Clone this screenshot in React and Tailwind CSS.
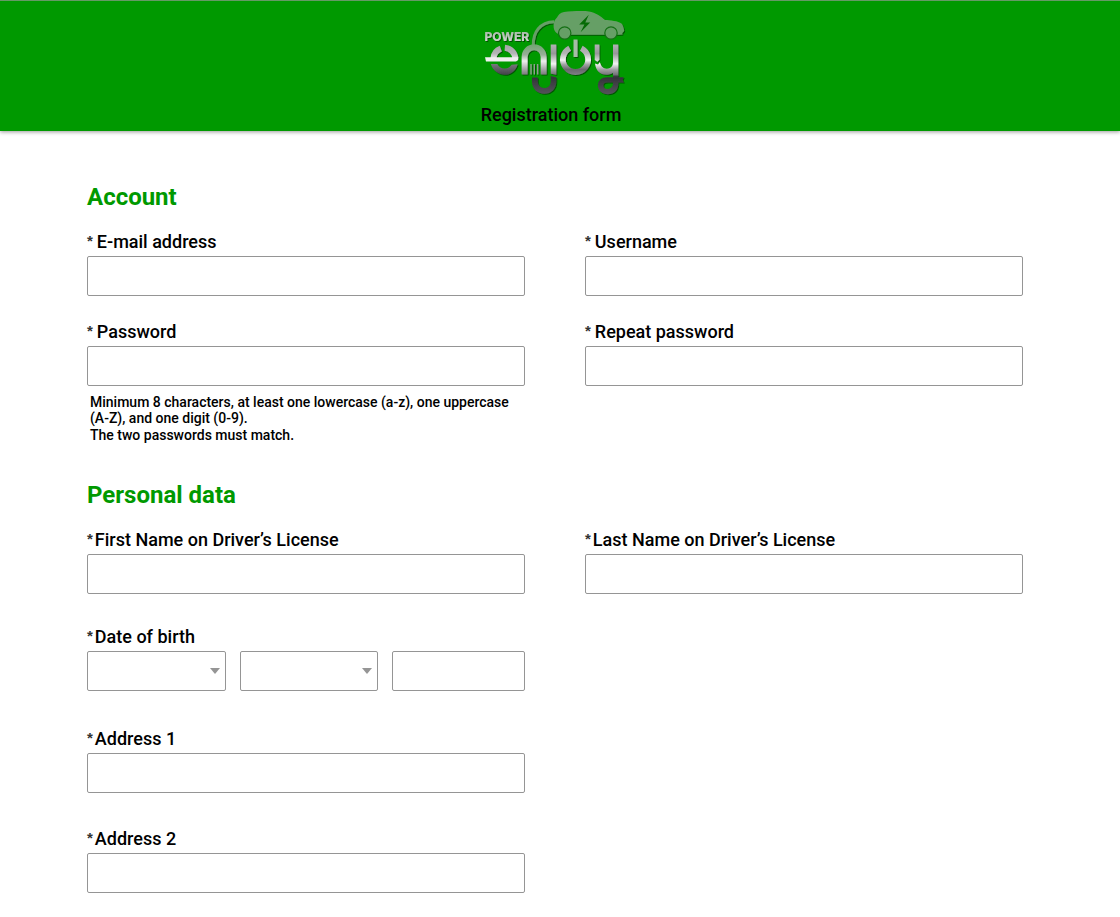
import React from "react";

function Logo() {
  return (
    <svg
      viewBox="480 8 150 90"
      role="img"
      aria-label="Power Enjoy"
      className="block h-[90px] w-[150px]"
      fill="none"
    >
      <defs>
        <linearGradient id="chrome" gradientUnits="userSpaceOnUse" x1="0" y1="44" x2="0" y2="75">
          <stop offset="0" stopColor="#a3a3a5" />
          <stop offset="0.3" stopColor="#b4b4b6" />
          <stop offset="0.52" stopColor="#f2f2f2" />
          <stop offset="0.66" stopColor="#a2a2a4" />
          <stop offset="0.82" stopColor="#68686c" />
          <stop offset="1" stopColor="#808085" />
        </linearGradient>
        <linearGradient id="stem" gradientUnits="userSpaceOnUse" x1="0" y1="44" x2="0" y2="76">
          <stop offset="0" stopColor="#b3b3b5" />
          <stop offset="0.3" stopColor="#979799" />
          <stop offset="0.62" stopColor="#f4f4f4" />
          <stop offset="0.8" stopColor="#a0a0a3" />
          <stop offset="1" stopColor="#68686c" />
        </linearGradient>
        <linearGradient id="arch" gradientUnits="userSpaceOnUse" x1="0" y1="44" x2="0" y2="75">
          <stop offset="0" stopColor="#6ea46e" />
          <stop offset="0.35" stopColor="#98af98" />
          <stop offset="0.55" stopColor="#efefef" />
          <stop offset="0.8" stopColor="#a9a9aa" />
          <stop offset="1" stopColor="#77777a" />
        </linearGradient>
        <linearGradient id="dark" gradientUnits="userSpaceOnUse" x1="0" y1="64" x2="0" y2="95">
          <stop offset="0" stopColor="#77777c" />
          <stop offset="0.45" stopColor="#34343a" />
          <stop offset="1" stopColor="#56565c" />
        </linearGradient>
        <linearGradient id="word" gradientUnits="userSpaceOnUse" x1="0" y1="32" x2="0" y2="41">
          <stop offset="0" stopColor="#a9bda9" />
          <stop offset="1" stopColor="#d2d2d2" />
        </linearGradient>
        <filter id="drop" x="-10%" y="-10%" width="120%" height="120%">
          <feDropShadow dx="1" dy="1" stdDeviation="0.5" floodColor="#003800" floodOpacity="0.7" />
        </filter>
      </defs>

      <g filter="url(#drop)">
        {/* charging cable and car */}
        <path d="M533.300 45c-.2-13 6.500-22.800 21-23.300" stroke="#669f66" strokeWidth="3" />
        <path
          d="M553.600 26c0-3.300 1-6.300 3.400-8.500 1.200-2.300 3.200-5 7-5.500 8-1 20-1.400 25-.5 6.500 1 12 5 16 8.500 5 .2 13.500 1 16.500 3.500 1.200 1.200 2.500 5 2.700 7.500l-2 2.200.3 1.300-3 .3h-56.500c-6 0-9.400-3-9.400-8.800z"
          fill="#669f66"
        />
      </g>
      <g stroke="#146f14" strokeWidth="1.200" fill="#669f66">
        <circle cx="564.700" cy="33" r="6.200" />
        <circle cx="611" cy="33" r="6.200" />
      </g>
      <path d="M588.800 14.800l-9.600 9.700h5.200l-3.800 7.800 9.600-9.800h-4.900z" fill="#066b06" />

      <g filter="url(#drop)">
        <text
          x="484.500"
          y="40.500"
          fontFamily="Inter, sans-serif"
          fontSize="12"
          fontWeight="800"
          fill="url(#word)"
        >
          POWER
        </text>

        {/* e */}
        <path
          d="M493.400 58.500A11.400 11.400 0 0 1 500.800 48.600M504.800 47.800A11.400 11.400 0 0 1 515.300 58.500"
          stroke="url(#chrome)"
          strokeWidth="6"
        />
        <path
          d="M490.800 64h6.600c1.300 2.900 3.900 4.500 7.300 4.500 3.200 0 5.400-1.400 6.900-3.800l6-.5c-1.500 6.300-6.300 10.500-12.700 10.500s-12.200-4.200-14.100-10.700z"
          fill="url(#dark)"
        />
      </g>
      <path d="M485 57.300h33.200v2.700l-2.200 1.600H486z" fill="#f0f0f0" />

      <g filter="url(#drop)">
        {/* n shaped as a plug */}
        <path d="M524.600 74.500V57a9.500 9.700 0 0 1 19 0v17.500" stroke="url(#arch)" strokeWidth="6" />
        <path d="M531 64v10.500M534.300 64v10.500M537.600 64v10.500" stroke="#8fa08f" strokeWidth="1.400" />

        {/* j */}
        <path d="M550.700 44.500h5.600v30.300l-5.600-1z" fill="url(#stem)" />
        <path
          d="M550.700 76l5.600 1.300v4.200c0 7.300-5 12.300-12 12.300s-12.300-5-12.300-12V77.500h5.800v4c0 4 2.800 6.400 6.500 6.400s6.400-2.700 6.400-6.500z"
          fill="url(#dark)"
        />

        {/* o shaped as a power button */}
        <path d="M569.700 48.200a12.600 12.600 0 1 0 11.600 0" stroke="url(#chrome)" strokeWidth="5.800" />
        <path d="M573.500 39.500h4V57h-4z" fill="#a6bda6" />

        {/* y */}
        <path d="M594.700 44.500h4.700v15.300l-2 2-2.700-1.800z" fill="url(#stem)" />
        <path
          d="M595 63.500l3 1 1.800-2.500c1.200 4.600 3.500 6.700 7 6.700 3.600 0 6-2.200 6.200-6.200v-18h5.300V76h-5.300v-3.200c-2 1.500-4.300 2-6.700 2-6.300 0-10.500-4.300-11.300-11.300z"
          fill="url(#stem)"
        />
        <path
          d="M613 75.500h5.300v1.800h5.500l-1.300 2.500 1.300 2.700h-5.500v1.500c0 6.200-4.500 10.300-10.400 10.300-5.800 0-10-4-10-8.800 0-5 4-8.200 9-8.200h6.100z M607.300 82.500c-2.500 0-4 1.200-4 3.100 0 2 1.700 3.400 4.300 3.400 3.200 0 5.400-2.400 5.400-5.700v-.8z"
          fillRule="evenodd"
          fill="url(#dark)"
        />
      </g>
    </svg>
  );
}

const boxClass =
  "block h-10 w-full rounded-xs border border-[#959595] bg-white px-3 text-base text-black outline-none focus:border-[#009900]";

function LabelText({ spaced, children }) {
  return (
    <span className={`flex items-start ${spaced ? "gap-1" : "gap-0.5"}`}>
      <span
        aria-hidden="true"
        className="font-['Liberation_Sans',sans-serif] text-[15px] leading-[22px] font-bold text-[#333333]"
      >
        *
      </span>
      <span>{children}</span>
    </span>
  );
}

function Field({ id, label, type = "text", spaced = false }) {
  return (
    <div>
      <label htmlFor={id} className="mb-0.5 block text-lg leading-6 font-medium">
        <LabelText spaced={spaced}>{label}</LabelText>
      </label>
      <input id={id} name={id} type={type} required className={boxClass} />
    </div>
  );
}

function DateSelect({ label, options }) {
  return (
    <div className="relative">
      <select aria-label={label} defaultValue="" className={`${boxClass} appearance-none`}>
        <option value=""></option>
        {options.map((option) => (
          <option key={option} value={option}>
            {option}
          </option>
        ))}
      </select>
      <svg
        viewBox="0 0 10 6"
        aria-hidden="true"
        className="pointer-events-none absolute top-[17px] right-[6px] h-1.5 w-2.5"
      >
        <path d="M0 0h10L5 6z" fill="#959595" />
      </svg>
    </div>
  );
}

function SectionTitle({ children }) {
  return <h2 className="text-2xl leading-8 font-bold text-[#009900]">{children}</h2>;
}

const days = Array.from({ length: 31 }, (_, i) => i + 1);
const months = Array.from({ length: 12 }, (_, i) => i + 1);

export default function App() {
  return (
    <div className="min-h-screen bg-white font-[Roboto,sans-serif] text-black">
      <header className="flex flex-col items-center border-t border-[#669966] bg-[#009900] pt-[7px] pb-1 shadow-[0_1px_4px_rgba(0,0,0,0.4)]">
        <div className="pr-2.5">
          <Logo />
        </div>
        <h1 className="pt-[5px] pr-[18px] text-lg leading-6 font-medium">Registration form</h1>
      </header>

      <form className="pt-[50px] pr-[97px] pb-6 pl-[87px]">
        <section>
          <SectionTitle>Account</SectionTitle>
          <div className="mt-[17px] grid grid-cols-2 gap-x-[60px] gap-y-6">
            <Field id="email" label="E-mail address" type="email" spaced />
            <Field id="username" label="Username" spaced />
            <Field id="password" label="Password" type="password" spaced />
            <Field id="repeat-password" label="Repeat password" type="password" spaced />
          </div>
          <div className="mt-2 grid grid-cols-2 gap-x-[60px]">
            <div className="pl-[3px] text-sm leading-4 font-medium">
              <p>Minimum 8 characters, at least one lowercase (a-z), one uppercase (A-Z), and one digit (0-9).</p>
              <p className="mt-px">The two passwords must match.</p>
            </div>
          </div>
        </section>

        <section className="mt-9">
          <SectionTitle>Personal data</SectionTitle>
          <div className="mt-[17px] grid grid-cols-2 gap-x-[60px] gap-y-[31px]">
            <Field id="first-name" label="First Name on Driver’s License" />
            <Field id="last-name" label="Last Name on Driver’s License" />
            <fieldset className="col-start-1">
              <legend className="mb-0.5 text-lg leading-6 font-medium">
                <LabelText>Date of birth</LabelText>
              </legend>
              <div className="grid grid-cols-[139fr_139fr_133fr] gap-3.5">
                <DateSelect label="Day" options={days} />
                <DateSelect label="Month" options={months} />
                <input aria-label="Year" inputMode="numeric" className={boxClass} />
              </div>
            </fieldset>
          </div>
          <div className="mt-9 grid grid-cols-2 gap-x-[60px] gap-y-[34px]">
            <Field id="address-1" label="Address 1" />
            <div className="col-start-1">
              <Field id="address-2" label="Address 2" />
            </div>
          </div>
        </section>
      </form>
    </div>
  );
}
